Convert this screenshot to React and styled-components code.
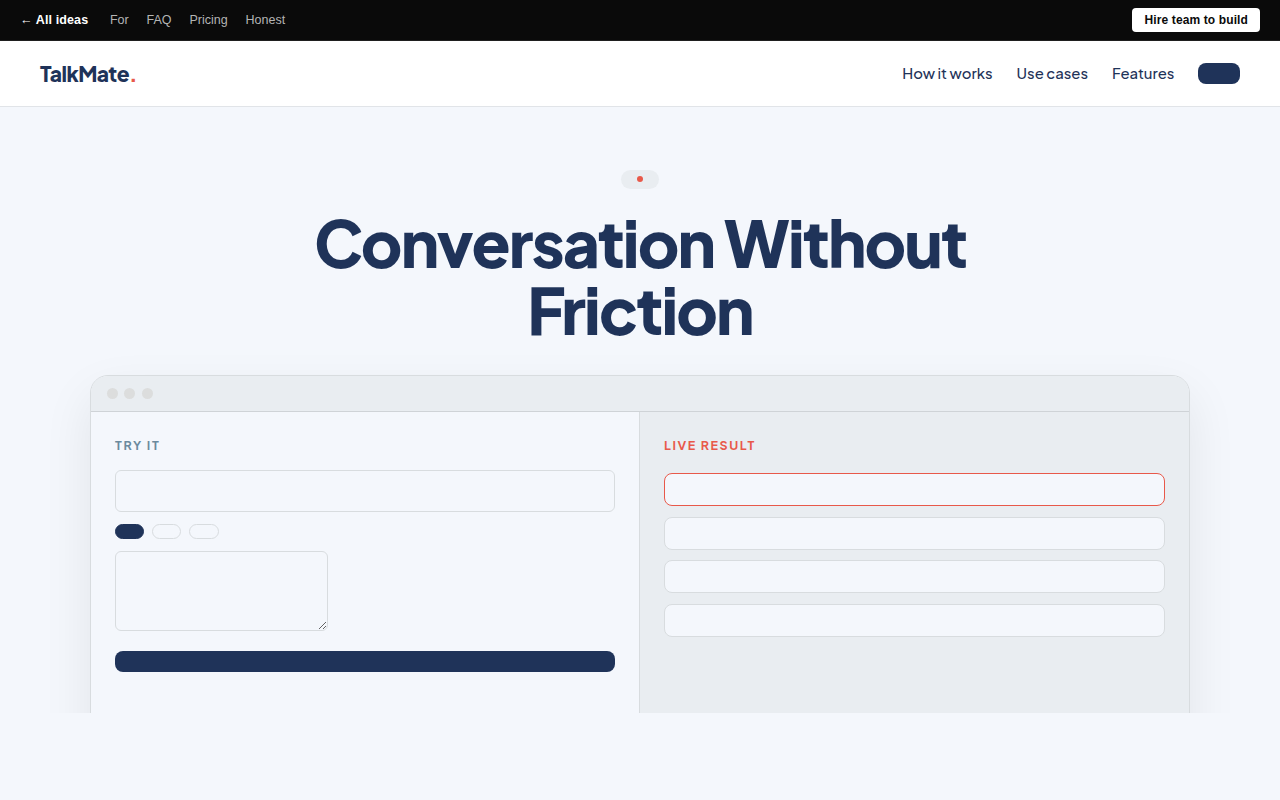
import React from "react";
import styled, { createGlobalStyle } from "styled-components";

const ink = "#1f3359";
const coral = "#e8594a";
const paper = "#f4f7fc";
const mist = "#e9edf1";
const line = "#d8dcdf";
const display = `"Plus Jakarta Sans", Inter, sans-serif`;

const GlobalStyle = createGlobalStyle`
  *, *::before, *::after { box-sizing: border-box; }
  body { margin: 0; background: ${paper}; color: ${ink}; font-family: ${display}; overflow: hidden; }
`;

const Page = styled.div`
  height: 800px;
  background: ${paper};
  overflow: hidden;
`;

const TopBar = styled.div`
  height: 41px;
  padding: 0 20px;
  display: flex;
  align-items: center;
  justify-content: space-between;
  background: #0a0a0a;
  border-bottom: 1px solid #1f1f1f;
  font: 12.5px/15px "Liberation Sans", Arial, sans-serif;
`;

const TopLinks = styled.div`
  display: flex;
  align-items: center;
  gap: 17.9px;
`;

const TopLink = styled.a`
  color: #b4b4b4;
`;

const BackLink = styled.a`
  color: #fff;
  font-weight: 700;
  letter-spacing: 0.12px;
  margin-right: 3.8px;
`;

const HireButton = styled.a`
  height: 24px;
  padding: 0 12px;
  display: flex;
  align-items: center;
  border-radius: 4px;
  background: #fff;
  color: #0a0a0a;
  font-size: 12px;
  font-weight: 700;
  letter-spacing: 0.12px;
`;

const Nav = styled.nav`
  height: 66px;
  padding: 0 39.6px 1px 40px;
  display: flex;
  align-items: center;
  justify-content: space-between;
  background: #fff;
  border-bottom: 1px solid #e1e4e8;
`;

const Logo = styled.div`
  padding-top: 2px;
  font-size: 21px;
  line-height: 28px;
  font-weight: 800;
  letter-spacing: -0.53px;
  white-space: nowrap;
`;

const LogoDot = styled.span`
  color: ${coral};
`;

const NavLinks = styled.div`
  display: flex;
  align-items: center;
  gap: 24px;
`;

const NavLink = styled.a`
  font-size: 14.88px;
  line-height: 20px;
  font-weight: 500;
  white-space: nowrap;
`;

const NavButton = styled.a`
  width: 42px;
  height: 21px;
  border-radius: 8px;
  background: ${ink};
`;

const Hero = styled.section`
  height: 606px;
  padding-top: 63px;
  display: flex;
  flex-direction: column;
  align-items: center;
  overflow: hidden;
`;

const Badge = styled.div`
  width: 38px;
  height: 19px;
  flex: none;
  padding-bottom: 1px;
  display: flex;
  align-items: center;
  justify-content: center;
  border-radius: 10px;
  background: ${mist};
`;

const BadgeDot = styled.span`
  width: 6px;
  height: 6px;
  border-radius: 50%;
  background: ${coral};
`;

const Title = styled.h1`
  flex: none;
  margin: 20px 0 31.6px;
  font-size: 64px;
  line-height: 67.2px;
  font-weight: 800;
  letter-spacing: -1.8px;
  text-align: center;
  white-space: nowrap;
`;

const Window = styled.div`
  flex: none;
  width: 1100px;
  height: 420px;
  display: flex;
  flex-direction: column;
  border: 1px solid ${line};
  border-radius: 18px;
  background: ${paper};
  box-shadow: 0 20px 50px rgba(0, 0, 0, 0.08);
  overflow: hidden;
`;

const WindowBar = styled.div`
  height: 36px;
  flex: none;
  padding: 0 16px;
  display: flex;
  align-items: center;
  gap: 6.4px;
  background: ${mist};
  border-bottom: 1px solid #cfd3d7;
`;

const WindowDot = styled.span`
  width: 11px;
  height: 11px;
  border-radius: 50%;
  background: #dcdddd;
`;

const Panels = styled.div`
  flex: 1;
  display: grid;
  grid-template-columns: 1fr 1fr;
`;

const FormPanel = styled.div`
  padding: 24px;
  border-right: 1px solid ${line};
`;

const ResultPanel = styled.div`
  padding: 24px;
  background: ${mist};
`;

const Label = styled.div`
  height: 20px;
  font-size: 12.5px;
  line-height: 18px;
  font-weight: 700;
  letter-spacing: 1.6px;
  color: ${(p) => (p.$live ? coral : "#6b8a9e")};
`;

const Field = styled.input`
  display: block;
  width: 100%;
  height: 42px;
  margin-top: 14px;
  border: 1px solid ${line};
  border-radius: 6px;
  background: ${paper};
`;

const Chips = styled.div`
  display: flex;
  gap: 8px;
  margin: 12px 0;
`;

const Chip = styled.span`
  width: 29.2px;
  height: 15px;
  border: 1px solid ${(p) => (p.$active ? ink : line)};
  border-radius: 8px;
  background: ${(p) => (p.$active ? ink : "transparent")};
`;

const Message = styled.textarea`
  display: block;
  width: 213px;
  height: 80px;
  border: 1px solid ${line};
  border-radius: 6px;
  background: ${paper};
`;

const Submit = styled.div`
  height: 21px;
  margin-top: 20px;
  border-radius: 8px;
  background: ${ink};
`;

const Results = styled.div`
  display: grid;
  gap: 10.6px;
  margin-top: 17.2px;
`;

const Result = styled.div`
  height: 33px;
  border: 1px solid ${(p) => (p.$active ? coral : line)};
  border-radius: 8px;
  background: ${paper};
`;

export default function App() {
  return (
    <Page>
      <GlobalStyle />
      <TopBar>
        <TopLinks>
          <BackLink>← All ideas</BackLink>
          <TopLink>For</TopLink>
          <TopLink>FAQ</TopLink>
          <TopLink>Pricing</TopLink>
          <TopLink>Honest</TopLink>
        </TopLinks>
        <HireButton>Hire team to build</HireButton>
      </TopBar>
      <Nav>
        <Logo>
          TalkMate<LogoDot>.</LogoDot>
        </Logo>
        <NavLinks>
          <NavLink>How it works</NavLink>
          <NavLink>Use cases</NavLink>
          <NavLink>Features</NavLink>
          <NavButton />
        </NavLinks>
      </Nav>
      <Hero>
        <Badge>
          <BadgeDot />
        </Badge>
        <Title>
          Conversation Without
          <br />
          Friction
        </Title>
        <Window>
          <WindowBar>
            <WindowDot />
            <WindowDot />
            <WindowDot />
          </WindowBar>
          <Panels>
            <FormPanel>
              <Label>TRY IT</Label>
              <Field />
              <Chips>
                <Chip $active />
                <Chip />
                <Chip />
              </Chips>
              <Message />
              <Submit />
            </FormPanel>
            <ResultPanel>
              <Label $live>LIVE RESULT</Label>
              <Results>
                <Result $active />
                <Result />
                <Result />
                <Result />
              </Results>
            </ResultPanel>
          </Panels>
        </Window>
      </Hero>
    </Page>
  );
}
